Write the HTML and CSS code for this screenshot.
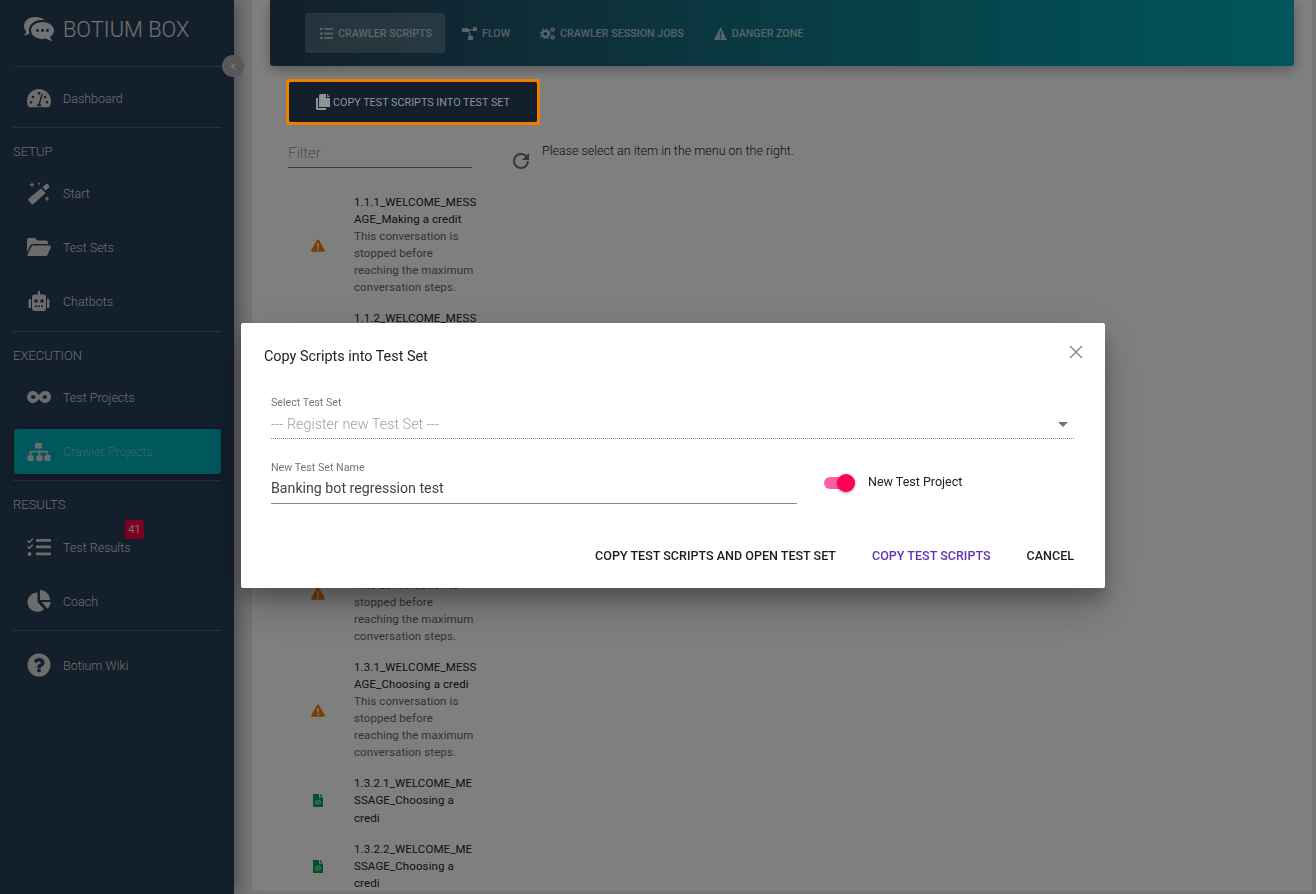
FILE: index.html
```html
<!DOCTYPE html>
<html lang="en">

<head>
	<meta charset="UTF-8">
	<meta name="viewport" content="width=device-width, initial-scale=1.0">
	<title>Botium Box</title>
	<link rel="stylesheet" href="styles.css">
</head>

<body>
	<aside class="sidebar">
		<div class="brand">
			<svg class="brand-logo" viewBox="0 0 32 26">
				<path d="M12 1C5.500 1 1 5 1 10c0 2.200 .9 4.100 2.400 5.700C2.900 17.200 2 18.400 1 19.400c2.300 0 4.200-.8 5.500-1.800-.4-1-.6-2-.6-3C5.900 8.500 11.500 4 18.500 4c1 0 2 .1 2.900 .3C19.500 2.100 16 1 12 1z" />
				<path d="M19.500 6C13 6 8 9.800 8 14.500S13 23 19.500 23c1.300 0 2.500-.2 3.700-.5 1.400 1 3.400 2.200 6.300 2.500-1.100-1.100-2-2.600-2.400-4.200 2.300-1.500 3.900-3.700 3.900-6.300C30.900 9.800 26 6 19.500 6z" />
				<circle cx="14.500" cy="14.500" r="1.400" fill="#263e56" />
				<circle cx="19.500" cy="14.500" r="1.400" fill="#263e56" />
				<circle cx="24.500" cy="14.500" r="1.400" fill="#263e56" />
			</svg>
			<span class="brand-name">BOTIUM BOX</span>
		</div>
		<button class="collapse">&lt;</button>
		<hr class="divider brand-divider">
		<a class="nav-item nav-item-dashboard">
			<svg class="nav-icon" viewBox="0 0 24 20"><path d="M12 1C5.400 1 0 6.400 0 13c0 2 .5 3.900 1.400 5.500.3.500.8.800 1.300.8h18.600c.5 0 1-.3 1.300-.8C23.500 16.900 24 15 24 13 24 6.400 18.600 1 12 1zm0 3c.7 0 1.300.5 1.300 1.300S12.700 6.600 12 6.600s-1.300-.6-1.300-1.300S11.300 4 12 4zM4 15.600c-.7 0-1.300-.6-1.300-1.300S3.300 13 4 13s1.300.6 1.300 1.300-.6 1.300-1.300 1.300zm2-5.300c-.7 0-1.300-.6-1.300-1.300S5.300 7.700 6 7.700s1.300.6 1.300 1.300-.6 1.300-1.300 1.300zm8.600 8H9.400c.2-1.300 1.100-2.300 2.200-2.600L14.300 6.200c.1-.4.500-.6.900-.5.400.1.600.5.500.9l-2.700 9.500c.9.400 1.500 1.200 1.600 2.200zM18 10.300c-.7 0-1.300-.6-1.300-1.300s.6-1.300 1.300-1.300 1.300.6 1.300 1.300-.6 1.300-1.300 1.300zm2 5.300c-.7 0-1.300-.6-1.300-1.300S19.300 13 20 13s1.300.6 1.300 1.300-.6 1.300-1.300 1.300z" /></svg>
			<span>Dashboard</span>
		</a>
		<hr class="divider">
		<div class="nav-heading">SETUP</div>
		<a class="nav-item">
			<svg class="nav-icon" viewBox="0 0 24 24"><path d="M15.500 6.200l3.300-2.900c.7-.6 1.700-.6 2.300.1l.9 1c.6.700.6 1.700-.1 2.300l-3.300 2.900zM14 7.500l4.600 4.600L6.800 22.800c-.7.600-1.700.6-2.300-.1l-2.800-3c-.6-.7-.6-1.700.1-2.300zM5 1l.8 1.900L7.700 3.700 5.800 4.500 5 6.400 4.200 4.500 2.300 3.700 4.200 2.900zM12 1l.5 1.200L13.700 2.700 12.500 3.200 12 4.400 11.500 3.200 10.300 2.700 11.500 2.200zM20 15l.8 1.900 1.900.8-1.900.8-.8 1.900-.8-1.900-1.900-.8 1.900-.8z" /></svg>
			<span>Start</span>
		</a>
		<a class="nav-item">
			<svg class="nav-icon" viewBox="0 0 24 20"><path d="M0 3c0-1.100.9-2 2-2h6l2.500 2.500H19c1.100 0 2 .9 2 2V7H6c-1.400 0-2.600.8-3.100 2L0 15.500z" /><path d="M6 8.500h16.500c1 0 1.700 1 1.300 1.900l-3.300 7.300c-.3.800-1 1.300-1.800 1.300H1.500c-.8 0-1.300-.8-1-1.500L4.300 9.700c.3-.7 1-1.200 1.700-1.200z" /></svg>
			<span>Test Sets</span>
		</a>
		<a class="nav-item">
			<svg class="nav-icon" viewBox="0 0 24 20"><path d="M11 0h2v3.500h3.500c1.400 0 2.500 1.100 2.500 2.500v11.500c0 1.400-1.100 2.500-2.500 2.500h-9C6.100 20 5 18.900 5 17.500V6c0-1.400 1.100-2.500 2.500-2.500H11zM9 8.200a1.800 1.800 0 100 3.600 1.800 1.800 0 000-3.600zm6 0a1.800 1.800 0 100 3.600 1.800 1.800 0 000-3.600zM8 14.500v1.500h2v-1.500zm3 0v1.500h2v-1.500zm3 0v1.500h2v-1.500zM3 8h1v9H3c-.8 0-1.500-.7-1.500-1.500v-6C1.500 8.700 2.200 8 3 8zm17 0h1c.8 0 1.500.7 1.500 1.500v6c0 .8-.7 1.500-1.500 1.500h-1z" /></svg>
			<span>Chatbots</span>
		</a>
		<hr class="divider">
		<div class="nav-heading">EXECUTION</div>
		<a class="nav-item">
			<svg class="nav-icon" viewBox="0 0 24 12"><path fill-rule="evenodd" d="M6 0c2.500 0 4.500 2 6 4 1.500-2 3.500-4 6-4 3.300 0 6 2.700 6 6s-2.700 6-6 6c-2.500 0-4.500-2-6-4-1.500 2-3.500 4-6 4-3.300 0-6-2.700-6-6s2.700-6 6-6zm0 4a2 2 0 100 4c1 0 2-1 3-2-1-1-2-2-3-2zm12 0c-1 0-2 1-3 2 1 1 2 2 3 2a2 2 0 100-4z" /></svg>
			<span>Test Projects</span>
		</a>
		<a class="nav-item nav-item-active">
			<svg class="nav-icon" viewBox="0 0 24 18"><path d="M8.500 0h7v5.500h-2.700v2.300h7.700c.7 0 1.200.5 1.200 1.200v3h1.300c.6 0 1 .4 1 1V17c0 .6-.4 1-1 1h-4c-.6 0-1-.4-1-1v-3.500c0-.6.400-1 1-1h1.200V9.500h-6.400v3h1.200c.6 0 1 .4 1 1V17c0 .6-.4 1-1 1h-4c-.6 0-1-.4-1-1v-3.500c0-.6.400-1 1-1h1.200v-3H4.800v3H6c.6 0 1 .4 1 1V17c0 .6-.4 1-1 1H2c-.6 0-1-.4-1-1v-3.500c0-.6.400-1 1-1h1.200V9c0-.7.500-1.200 1.200-1.200h7.700V5.500H8.500z" transform="translate(-.5 0)" /></svg>
			<span>Crawler Projects</span>
		</a>
		<hr class="divider">
		<div class="nav-heading">RESULTS</div>
		<a class="nav-item nav-item-results">
			<svg class="nav-icon" viewBox="0 0 24 19"><path d="M1 2.500l1.200 1.200L5.200 .7l1.100 1.100-4.100 4.100L0 3.600zM1 8.500l1.200 1.200 3-3 1.100 1.100-4.100 4.100L0 9.600z" /><circle cx="2.500" cy="16.500" r="2" /><rect x="9" y="1.500" width="15" height="2.800" rx=".6" /><rect x="9" y="8" width="15" height="2.800" rx=".6" /><rect x="9" y="15" width="15" height="2.800" rx=".6" /></svg>
			<span>Test Results</span>
			<b class="badge">41</b>
		</a>
		<a class="nav-item">
			<svg class="nav-icon" viewBox="0 0 24 22"><path d="M10.500 2.500V12l6.500 7.200c-1.800 1.600-4.100 2.600-6.600 2.600C4.900 21.800 .5 17.400 .5 12c0-5 4.400-9.300 10-9.500zM13 0c5.500 0 10 4.500 10 10H13zm10.800 12c-.3 2.700-1.500 5-3.300 6.800L14.700 12z" /></svg>
			<span>Coach</span>
		</a>
		<hr class="divider divider-coach">
		<a class="nav-item nav-item-wiki">
			<svg class="nav-icon" viewBox="0 0 24 24"><path fill-rule="evenodd" d="M12 .5a11.500 11.500 0 110 23 11.500 11.500 0 010-23zM12.300 5C9.800 5 8.200 6 7 7.900c-.2.200-.1.500.1.700l1.800 1.300c.2.200.5.100.7-.1.700-.9 1.200-1.400 2.300-1.400.8 0 1.800.5 1.800 1.300 0 .6-.5.900-1.300 1.300-1 .6-2.200 1.300-2.200 3v.5c0 .3.200.5.500.5h3.100c.3 0 .5-.2.500-.5v-.3c0-1.100 3.300-1.200 3.300-4.300C17.600 7 14.900 5 12.300 5zM12 15.500a1.900 1.900 0 100 3.800 1.900 1.900 0 000-3.800z" /></svg>
			<span>Botium Wiki</span>
		</a>
	</aside>

	<main class="content">
		<nav class="tabs">
			<a class="tab tab-active">
				<svg class="tab-icon" viewBox="0 0 13 13"><circle cx="1.300" cy="2" r="1.200" /><circle cx="1.300" cy="6.500" r="1.200" /><circle cx="1.300" cy="11" r="1.200" /><rect x="4" y="1.200" width="9" height="1.600" /><rect x="4" y="5.700" width="9" height="1.600" /><rect x="4" y="10.200" width="9" height="1.600" /></svg>
				CRAWLER SCRIPTS
			</a>
			<a class="tab">
				<svg class="tab-icon tab-icon-wide" viewBox="0 0 15 13"><rect x="0" y="1" width="6" height="4" /><rect x="11" y="0" width="4" height="4" /><rect x="6" y="9" width="5" height="4" /><path d="M5 2.300h7v1.200H7.300l2 6h-1.300L5.900 4H5z" /></svg>
				FLOW
			</a>
			<a class="tab">
				<svg class="tab-icon tab-icon-wide" viewBox="0 0 15 13">
					<circle cx="5.300" cy="6.800" r="3" fill="none" stroke="currentColor" stroke-width="2.300" />
					<circle cx="5.300" cy="6.800" r="4.700" fill="none" stroke="currentColor" stroke-width="1.500" stroke-dasharray="1.800 1.890" />
					<circle cx="12.600" cy="2.600" r="1.300" fill="none" stroke="currentColor" stroke-width="1.300" />
					<circle cx="12.600" cy="2.600" r="2.100" fill="none" stroke="currentColor" stroke-width=".9" stroke-dasharray="1 1.200" />
					<circle cx="12.600" cy="10.400" r="1.300" fill="none" stroke="currentColor" stroke-width="1.300" />
					<circle cx="12.600" cy="10.400" r="2.100" fill="none" stroke="currentColor" stroke-width=".9" stroke-dasharray="1 1.200" />
				</svg>
				CRAWLER SESSION JOBS
			</a>
			<a class="tab">
				<svg class="tab-icon" viewBox="0 0 13 13"><path fill-rule="evenodd" d="M6.500 0l6.500 13H0zM5.800 4.500v4.200h1.400V4.500zm0 5.200v1.700h1.400V9.700z" /></svg>
				DANGER ZONE
			</a>
		</nav>

		<div class="copy-focus">
			<button class="copy-button">
				<svg class="copy-icon" viewBox="0 0 14 16"><path d="M5 0h5v4h4v9H3V2c0-1.100.9-2 2-2zM11 0l3 3h-3z" /><path d="M0 4h2v10h8v2H1.500C.7 16 0 15.300 0 14.500z" /></svg>
				COPY TEST SCRIPTS INTO TEST SET
			</button>
		</div>

		<div class="split">
			<div class="script-panel">
				<div class="filter-row">
					<div class="filter-field">Filter</div>
					<svg class="refresh" viewBox="0 0 24 24"><path d="M17.650 6.350A7.960 7.960 0 0012 4a8 8 0 108 8h-2.100A5.950 5.950 0 0112 18a6 6 0 010-12c1.650 0 3.150.69 4.230 1.770L13 11h7V4z" /></svg>
				</div>
				<ul class="script-list">
					<li class="script-item">
						<svg class="warn-icon" viewBox="0 0 16 14"><path fill-rule="evenodd" d="M8 0c.4 0 .7.200.9.500l6.900 12c.4.700-.1 1.500-.9 1.500H1.100c-.8 0-1.300-.8-.9-1.500l6.900-12C7.300 .2 7.600 0 8 0zM7 4.500l.2 5h1.600l.2-5zm1 6a1.100 1.100 0 100 2.200 1.100 1.100 0 000-2.200z" /></svg>
						<div class="script-text">
							<div class="script-name">1.1.1_WELCOME_MESSAGE_Making a credit</div>
							<div class="script-note">This conversation is stopped before reaching the maximum conversation steps.</div>
						</div>
					</li>
					<li class="script-item">
						<svg class="warn-icon" viewBox="0 0 16 14"><path fill-rule="evenodd" d="M8 0c.4 0 .7.200.9.500l6.900 12c.4.700-.1 1.500-.9 1.500H1.100c-.8 0-1.300-.8-.9-1.500l6.900-12C7.300 .2 7.600 0 8 0zM7 4.500l.2 5h1.600l.2-5zm1 6a1.100 1.100 0 100 2.200 1.100 1.100 0 000-2.200z" /></svg>
						<div class="script-text">
							<div class="script-name">1.1.2_WELCOME_MESSAGE_Making a credit</div>
							<div class="script-note">This conversation is stopped before reaching the maximum conversation steps.</div>
						</div>
					</li>
					<li class="script-item">
						<svg class="warn-icon" viewBox="0 0 16 14"><path fill-rule="evenodd" d="M8 0c.4 0 .7.200.9.500l6.900 12c.4.700-.1 1.500-.9 1.500H1.100c-.8 0-1.300-.8-.9-1.500l6.900-12C7.300 .2 7.600 0 8 0zM7 4.500l.2 5h1.600l.2-5zm1 6a1.100 1.100 0 100 2.200 1.100 1.100 0 000-2.200z" /></svg>
						<div class="script-text">
							<div class="script-name">1.2.1_WELCOME_MESSAGE_Making a credit</div>
							<div class="script-note">This conversation is stopped before reaching the maximum conversation steps.</div>
						</div>
					</li>
					<li class="script-item">
						<svg class="warn-icon" viewBox="0 0 16 14"><path fill-rule="evenodd" d="M8 0c.4 0 .7.200.9.500l6.900 12c.4.700-.1 1.500-.9 1.500H1.100c-.8 0-1.300-.8-.9-1.500l6.900-12C7.300 .2 7.600 0 8 0zM7 4.500l.2 5h1.600l.2-5zm1 6a1.100 1.100 0 100 2.200 1.100 1.100 0 000-2.200z" /></svg>
						<div class="script-text">
							<div class="script-name">1.2.2_WELCOME_MESSAGE_Making a credit</div>
							<div class="script-note">This conversation is stopped before reaching the maximum conversation steps.</div>
						</div>
					</li>
					<li class="script-item">
						<svg class="warn-icon" viewBox="0 0 16 14"><path fill-rule="evenodd" d="M8 0c.4 0 .7.200.9.500l6.900 12c.4.700-.1 1.500-.9 1.500H1.100c-.8 0-1.300-.8-.9-1.500l6.900-12C7.300 .2 7.600 0 8 0zM7 4.500l.2 5h1.600l.2-5zm1 6a1.100 1.100 0 100 2.200 1.100 1.100 0 000-2.200z" /></svg>
						<div class="script-text">
							<div class="script-name">1.3.1_WELCOME_MESSAGE_Choosing a credi</div>
							<div class="script-note">This conversation is stopped before reaching the maximum conversation steps.</div>
						</div>
					</li>
					<li class="script-item">
						<svg class="file-icon" viewBox="0 0 10 13"><path d="M0 0h6v3.500h4V13H0zM7 0l3 2.600H7z" /><path class="file-code" d="M3.800 6.200L2.200 8.200l1.600 2M6.200 6.200l1.600 2-1.600 2M5.500 5.800l-1 4.800" /></svg>
						<div class="script-text">
							<div class="script-name">1.3.2.1_WELCOME_MESSAGE_Choosing a credi</div>
						</div>
					</li>
					<li class="script-item">
						<svg class="file-icon" viewBox="0 0 10 13"><path d="M0 0h6v3.500h4V13H0zM7 0l3 2.600H7z" /><path class="file-code" d="M3.800 6.200L2.200 8.200l1.600 2M6.200 6.200l1.600 2-1.600 2M5.500 5.800l-1 4.800" /></svg>
						<div class="script-text">
							<div class="script-name">1.3.2.2_WELCOME_MESSAGE_Choosing a credi</div>
						</div>
					</li>
				</ul>
			</div>
			<p class="select-hint">Please select an item in the menu on the right.</p>
		</div>
	</main>

	<div class="overlay"></div>

	<section class="dialog">
		<h2 class="dialog-title">Copy Scripts into Test Set</h2>
		<svg class="dialog-close" viewBox="0 0 14 14"><path d="M1 1l12 12M13 1L1 13" /></svg>
		<div class="field field-select">
			<label class="field-label">Select Test Set</label>
			<div class="select-value">--- Register new Test Set ---</div>
			<span class="select-arrow"></span>
		</div>
		<div class="name-row">
			<div class="field field-name">
				<label class="field-label">New Test Set Name</label>
				<div class="name-value">Banking bot regression test</div>
			</div>
			<div class="switch-row">
				<span class="switch"><span class="switch-thumb"></span></span>
				<span class="switch-label">New Test Project</span>
			</div>
		</div>
		<div class="dialog-actions">
			<button class="action">COPY TEST SCRIPTS AND OPEN TEST SET</button>
			<button class="action action-primary">COPY TEST SCRIPTS</button>
			<button class="action">CANCEL</button>
		</div>
	</section>
</body>

</html>
```

FILE: styles.css
```css
:root {
	--sidebar-bg: #263e56;
	--teal: #00aeb8;
	--text-dark: #222222;
}

* {
	box-sizing: border-box;
}

body {
	margin: 0;
	display: flex;
	overflow: hidden;
	height: 894px;
	font-family: Roboto, sans-serif;
	background-color: #eeeeee;
	color: var(--text-dark);
}

/* sidebar */
.sidebar {
	position: relative;
	flex: 0 0 234px;
	background-color: var(--sidebar-bg);
	color: #ffffff;
	padding: 0 13px;
	box-shadow: 0 0 20px rgba(0, 0, 0, 0.55);
}

.brand {
	display: flex;
	align-items: center;
	height: 58px;
	padding-left: 10px;
	gap: 8px;
}

.brand-logo {
	width: 32px;
	height: 26px;
	fill: #e4e4e4;
}

.brand-name {
	font-size: 21.800px;
	font-weight: 300;
	color: #e4e4e4;
}

.collapse {
	position: absolute;
	left: 222px;
	top: 55px;
	width: 22px;
	height: 22px;
	border: 0;
	border-radius: 50%;
	padding: 0;
	background-color: #b0b0b0;
	color: #ffffff;
	font-size: 10px;
	font-family: Roboto, sans-serif;
}

.divider {
	margin: 3px 0 0;
	border: 0;
	border-top: 1px solid #4f6478;
}

.brand-divider {
	margin: 8px -3px 0 1px;
}

.divider-coach {
	margin-top: 2px;
}

.nav-item {
	position: relative;
	display: flex;
	align-items: center;
	height: 54px;
	padding-left: 14px;
	color: #dddddd;
	font-size: 12.500px;
	font-weight: 300;
}

.nav-item > span {
	margin-left: 12px;
}

.nav-item-dashboard {
	margin: 4px 0 -1px;
}

.nav-item-active {
	height: 45px;
	margin: 5px 0 6px 1px;
	padding-left: 13px;
	border-radius: 3px;
	background-color: var(--teal);
	color: rgba(255, 255, 255, 0.45);
	box-shadow: 0 4px 8px rgba(0, 0, 0, 0.25);
}

.nav-item-active + .divider {
	margin-top: 0;
}

.nav-item-results {
	margin-top: 7px;
}

.nav-item-wiki {
	margin-top: 7px;
}

.nav-icon {
	flex: 0 0 24px;
	width: 24px;
	height: 24px;
	fill: #d8d8d8;
}

.nav-heading {
	height: 16px;
	margin: 16px 0 6px;
	font-size: 13px;
	font-weight: 300;
	line-height: 16px;
	color: #d5d9dc;
}

.badge {
	position: absolute;
	left: 112px;
	top: 0;
	width: 19px;
	height: 19px;
	background-color: #ff0040;
	border-radius: 2px;
	font-size: 11px;
	font-weight: 400;
	line-height: 19px;
	text-align: center;
	color: #e8e8e8;
}

/* main area */
.content {
	position: relative;
	flex: 1;
	min-width: 0;
	height: 891px;
	margin: 0 4px 0 18px;
	padding: 0 18px;
	background-color: #ffffff;
}

.tabs {
	display: flex;
	align-items: center;
	height: 66px;
	padding: 0 35px;
	border-radius: 0 0 3px 3px;
	background: linear-gradient(90deg, var(--sidebar-bg), var(--teal) 100%);
	box-shadow: 0 4px 12px rgba(0, 0, 0, 0.3);
	gap: 2px;
}

.tab {
	display: flex;
	align-items: center;
	height: 40px;
	padding: 0 13px 0 15px;
	border-radius: 3px;
	font-size: 10.700px;
	font-weight: 500;
	color: rgba(255, 255, 255, 0.65);
	gap: 5px;
}

.tab-active {
	background-color: rgba(255, 255, 255, 0.2);
}

.tab-icon {
	width: 13px;
	height: 13px;
	fill: currentColor;
}

.tab-icon-wide {
	width: 15px;
}

/* the focus ring sits above the modal backdrop */
.copy-focus {
	position: relative;
	z-index: 6;
	width: fit-content;
	margin: 13px 0 0 16px;
	border: 3px solid #f07c00;
	border-radius: 1px;
}

.copy-button {
	display: flex;
	align-items: center;
	justify-content: center;
	width: 248px;
	height: 40px;
	border: 0;
	padding: 0;
	border-radius: 2px;
	background-color: #131f2b;
	color: #8f9499;
	font-family: Roboto, sans-serif;
	font-size: 10.800px;
	gap: 3px;
}

.copy-icon {
	width: 14px;
	height: 16px;
	fill: currentColor;
}

.split {
	display: flex;
	margin-left: 18px;
}

.script-panel {
	flex: 0 0 254px;
}

.filter-row {
	display: flex;
	align-items: flex-start;
	gap: 37px;
	padding-top: 14px;
	margin-bottom: 21px;
}

.filter-field {
	width: 184px;
	height: 29px;
	font-size: 15px;
	font-weight: 300;
	line-height: 28px;
	color: #9b9b9b;
	border-bottom: 1px solid #777777;
}

.refresh {
	width: 24px;
	height: 24px;
	margin-top: 10px;
	fill: #6f6f6f;
}

.script-list {
	list-style: none;
	margin: 0;
	padding: 0;
}

.script-item {
	display: flex;
	align-items: center;
	padding-bottom: 14px;
}

.warn-icon {
	flex: 0 0 14px;
	width: 14px;
	height: 13px;
	margin-left: 23px;
	fill: #f57c00;
}

.file-icon {
	flex: 0 0 10px;
	width: 10px;
	height: 13px;
	margin: 0 2px 0 25px;
	fill: #00a651;
}

.file-code {
	fill: none;
	stroke: #ffffff;
	stroke-width: 0.8;
}

.script-text {
	width: 125px;
	margin-left: 29px;
	font-size: 11.500px;
	line-height: 17.050px;
	letter-spacing: 0.1px;
	overflow-wrap: anywhere;
}

.script-name {
	color: #222222;
}

.script-note {
	color: #666666;
}

.select-hint {
	margin: 18px 0 0;
	font-size: 12.500px;
	font-weight: 300;
	color: #222222;
}

/* modal */
.overlay {
	position: fixed;
	inset: 0;
	background-color: rgba(0, 0, 0, 0.5);
	z-index: 5;
}

.dialog {
	position: fixed;
	left: 241px;
	top: 323px;
	width: 864px;
	height: 265px;
	background-color: #ffffff;
	border-radius: 2px;
	padding: 0 31px 0 30px;
	box-shadow: 0 11px 15px rgba(0, 0, 0, 0.2), 0 24px 38px rgba(0, 0, 0, 0.14), 0 9px 46px rgba(0, 0, 0, 0.12);
	z-index: 7;
}

.dialog-title {
	height: 63px;
	margin: 0 0 0 -7px;
	padding-top: 25px;
	font-size: 14.400px;
	font-weight: 400;
	line-height: 18px;
	color: #212121;
}

.dialog-close {
	position: absolute;
	right: 22px;
	top: 22px;
	width: 14px;
	height: 14px;
	fill: none;
	stroke: #8c8c8c;
	stroke-width: 1.500;
}

.field {
	position: relative;
}

.field-label {
	display: block;
	font-size: 10.700px;
	line-height: 13px;
	color: #757575;
}

.field-select {
	height: 53px;
	padding-top: 10px;
	border-bottom: 1px dotted #8a8a8a;
}

.select-value {
	margin-top: 6px;
	font-size: 14.400px;
	font-weight: 300;
	line-height: 20px;
	color: #a0a0a0;
}

.select-arrow {
	position: absolute;
	right: 6px;
	bottom: 11px;
	border-left: 5px solid transparent;
	border-right: 5px solid transparent;
	border-top: 5px solid #757575;
}

.name-row {
	display: flex;
	align-items: center;
	margin-top: 22px;
}

.field-name {
	width: 526px;
	height: 43px;
	border-bottom: 1px solid #8a8a8a;
}

.name-value {
	margin-top: 4px;
	font-size: 14.200px;
	line-height: 20px;
	color: #444444;
}

.switch-row {
	display: flex;
	align-items: center;
	margin-left: 27px;
	gap: 13px;
}

.switch {
	position: relative;
	display: block;
	width: 31px;
	height: 12px;
	background-color: #ff5fa2;
	border-radius: 6px;
}

.switch-thumb {
	position: absolute;
	right: 0;
	top: -3px;
	width: 18px;
	height: 18px;
	border-radius: 50%;
	background-color: #ff0057;
	box-shadow: 0 1px 3px rgba(0, 0, 0, 0.4);
}

.switch-label {
	margin-bottom: 2px;
	font-size: 12.500px;
	color: #212121;
}

.dialog-actions {
	display: flex;
	justify-content: flex-end;
	align-items: center;
	margin-top: 44px;
	gap: 36px;
}

.action {
	border: 0;
	padding: 0;
	background: none;
	font-family: Roboto, sans-serif;
	font-size: 12.550px;
	font-weight: 500;
	color: #1c1c1c;
}

.action-primary {
	color: #5e35b1;
}
```
